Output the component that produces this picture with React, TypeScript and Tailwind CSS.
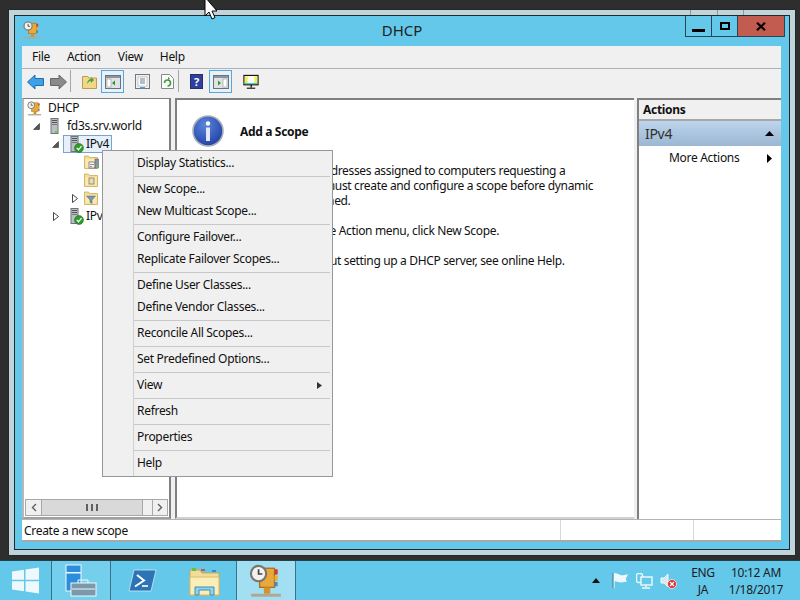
import React from "react";

const font = { fontFamily: '"Noto Sans", "Open Sans", sans-serif' };

function ServerIcon({ check }: { check?: boolean }) {
  return (
    <svg width="14" height="17" viewBox="0 0 14 17">
      <rect x="1" y="0.5" width="7" height="15" fill="#b9bfc4" stroke="#6e7478" strokeWidth="1" />
      <rect x="2" y="2" width="5" height="1" fill="#555" />
      <rect x="2" y="4" width="5" height="1" fill="#555" />
      <rect x="2" y="6" width="5" height="1" fill="#777" />
      {check ? (
        <>
          <circle cx="9" cy="12" r="4.5" fill="#2f9a2a" stroke="#1c6a1a" strokeWidth="0.5" />
          <path d="M6.8 12l1.7 1.8 3-3.6" stroke="#fff" strokeWidth="1.3" fill="none" />
        </>
      ) : (
        <rect x="5" y="13" width="2" height="2" fill="#5fd04a" />
      )}
    </svg>
  );
}

function DhcpIcon({ size = 16, body = "#e8a83a" }: { size?: number; body?: string }) {
  return (
    <svg width={size} height={size} viewBox="0 0 16 16">
      <rect x="5" y="2" width="7" height="9" fill={body} stroke="#a8701c" strokeWidth="0.6" />
      <rect x="12" y="2.5" width="1.5" height="2.5" fill="#d43a2a" />
      <rect x="12" y="5.5" width="1.5" height="2.5" fill="#e8b02a" />
      <rect x="12" y="8.5" width="1.5" height="2" fill="#4a88c8" />
      <circle cx="4.5" cy="4.5" r="3.6" fill="#f2f2ee" stroke="#77756e" strokeWidth="1" />
      <path d="M4.5 2.5v2.2h1.8" stroke="#444" strokeWidth="0.8" fill="none" />
      <rect x="7" y="11" width="3" height="3" fill="#d8902a" />
      <rect x="1" y="14" width="14" height="1.4" fill="#b0a890" />
    </svg>
  );
}

function FolderIcon({ kind }: { kind: "scope" | "server" | "filter" }) {
  return (
    <svg width="15" height="14" viewBox="0 0 15 14">
      <path d="M0.5 2.5V1h4l1 1.5h8v11h-13z" fill="#f7dc93" stroke="#c9a85c" strokeWidth="0.8" />
      <rect x="1.5" y="4" width="11" height="8.5" fill="#fbe9b5" />
      {kind === "scope" && (
        <>
          <rect x="5" y="7" width="6" height="6" fill="#f4f4f4" stroke="#666" strokeWidth="0.7" />
          <rect x="6.5" y="9" width="1" height="1" fill="#333" />
          <rect x="8.5" y="9" width="1" height="1" fill="#333" />
          <rect x="6.5" y="11" width="1" height="1" fill="#333" />
          <rect x="11" y="4" width="3.5" height="9" fill="#8d9499" stroke="#555" strokeWidth="0.5" />
          <rect x="12" y="11" width="2" height="1.5" fill="#5fd04a" />
        </>
      )}
      {kind === "server" && (
        <rect x="5" y="5" width="5" height="6" fill="#e6dcc0" stroke="#8b7c55" strokeWidth="0.8" />
      )}
      {kind === "filter" && <path d="M2.5 5h9l-3.5 4v3.5l-2-1.2V9z" fill="#7f95a8" stroke="#4f6477" strokeWidth="0.5" />}
    </svg>
  );
}

function Arrow({ open }: { open?: boolean }) {
  return open ? (
    <svg width="7" height="7" viewBox="0 0 7 7"><path d="M6.5 0.5v6h-6z" fill="#555" stroke="#333" strokeWidth="0.6" /></svg>
  ) : (
    <svg width="6" height="9" viewBox="0 0 6 9"><path d="M0.5 0.5l5 4-5 4z" fill="#fff" stroke="#333" strokeWidth="0.9" /></svg>
  );
}

function ArrowBox({ open, show = true }: { open?: boolean; show?: boolean }) {
  return <span className="w-[15px] h-full flex items-center justify-center shrink-0">{show && <Arrow open={open} />}</span>;
}

function ToolBtn({ active, children, w = "w-[23px]" }: { active?: boolean; children: React.ReactNode; w?: string }) {
  return (
    <div
      className={
        "h-[23px] flex items-center justify-center shrink-0 border " +
        w +
        (active ? " border-[#5aa6dc] bg-[#e6f1f9]" : " border-transparent")
      }
    >
      {children}
    </div>
  );
}

function PaneIcon({ right }: { right?: boolean }) {
  return (
    <svg width="16" height="14" viewBox="0 0 16 14">
      <rect x="0.5" y="0.5" width="15" height="13" fill="#dfe3e6" stroke="#6b7378" />
      <rect x="1" y="1" width="14" height="2" fill="#8d969c" />
      <rect x={right ? 10 : 2} y="4" width="4" height="8" fill="#fff" stroke="#8d969c" strokeWidth="0.6" />
      <path d={right ? "M5 5.5l3 2.5-3 2.5z" : "M10 5.5l-3 2.5 3 2.5z"} fill="#2f9a2a" />
    </svg>
  );
}

const menu: (string | null)[] = [
  "Display Statistics...",
  null,
  "New Scope...",
  "New Multicast Scope...",
  null,
  "Configure Failover...",
  "Replicate Failover Scopes...",
  null,
  "Define User Classes...",
  "Define Vendor Classes...",
  null,
  "Reconcile All Scopes...",
  null,
  "Set Predefined Options...",
  null,
  "View",
  null,
  "Refresh",
  null,
  "Properties",
  null,
  "Help",
];

function ContextMenu() {
  return (
    <div className="absolute left-[102px] top-[150px] w-[231px] h-[327px] bg-[#f0f0f0] border border-[#979797] pt-[1px] z-10 text-[12px] text-[#111]">
      <div className="absolute left-[30px] top-0 bottom-0 w-px bg-[#d0d0d0]" />
      {menu.map((m, i) =>
        m === null ? (
          <div key={i} className="h-[4px] flex items-center pl-[31px] pr-[2px]">
            <div className="h-px w-full bg-[#c8c8c8]" />
          </div>
        ) : (
          <div key={i} className="h-[22px] flex items-center pl-[34px] pr-[10px] justify-between whitespace-nowrap">
            <span>{m}</span>
            {m === "View" && (
              <svg width="5" height="7" viewBox="0 0 5 7"><path d="M0 0l5 3.5L0 7z" fill="#333" /></svg>
            )}
          </div>
        )
      )}
    </div>
  );
}

function WinLogo() {
  return (
    <svg width="27" height="27" viewBox="0 0 27 27">
      <path d="M0 4.5l12-1.8v10H0zM13.5 2.4L27 .4v12.3H13.5zM0 14.2h12v10L0 22.6zM13.5 14.2H27v12.4l-13.5-2z" fill="#eef9fd" />
    </svg>
  );
}

export default function App() {
  return (
    <div className="relative w-[800px] h-[600px] bg-[#2e2e2e] overflow-hidden flex flex-col tracking-[-0.3px]" style={font}>
      {/* Window */}
      <div className="relative mt-[9px] ml-[8px] w-[788px] h-[547px] border border-[#22292c] bg-[#c1d4da] p-[5px] shrink-0">
        <div className="absolute left-[681px] top-0 w-px h-[5px] bg-[#8a9aa0]" />
        <div className="absolute left-[708px] top-0 w-px h-[5px] bg-[#8a9aa0]" />
        <div className="absolute left-[734px] top-0 w-px h-[5px] bg-[#8a9aa0]" />
        <div className="w-full h-full border border-[#22292c] bg-[#64c8ea] flex flex-col">
          {/* Title */}
          <div className="grid grid-cols-[104px_1fr_104px] h-[30px] shrink-0">
            <div className="pl-[8px] pt-[5px]"><DhcpIcon size={18} /></div>
            <div className="text-center text-[15px] text-[#1f1f1f] pt-[3px] tracking-normal">DHCP</div>
            <div className="flex h-[21px] justify-end">
              <div className="w-[27px] border border-[#2a4552] border-t-0 flex items-end justify-center pb-[4px]">
                <div className="w-[13px] h-[3px] bg-black" />
              </div>
              <div className="w-[26px] border-b border-r border-[#2a4552] flex items-center justify-center">
                <div className="w-[10px] h-[8px] border-2 border-black" />
              </div>
              <div className="w-[47px] border-b border-r border-[#2a4552] bg-[#c25b50] flex items-center justify-center mr-[4px]">
                <svg width="10" height="9" viewBox="0 0 10 9"><path d="M1 0.8l8 7.4M9 0.8l-8 7.4" stroke="#000" strokeWidth="2.2" /></svg>
              </div>
            </div>
          </div>
          {/* Client */}
          <div className="ml-[7px] mr-[7px] w-[759px] flex-1 flex flex-col min-h-0 bg-[#f0f0f0]">
            <div className="h-[23px] flex items-center bg-[#f0f0f0] border-b border-[#aab2bb] shrink-0 text-[12px] text-[#111] pl-[10px] pb-[1px] gap-[17px]">
              <span>File</span><span>Action</span><span>View</span><span>Help</span>
            </div>
            <div className="h-[29px] flex items-start pt-[1px] bg-[#f0f0f0] shrink-0 pl-[2px]">
              <ToolBtn><svg width="17" height="16" viewBox="0 0 17 16"><path d="M0.5 8L8 1v3.5h8.5v7H8V15z" fill="#3ea0e6" stroke="#1f6fb0" /></svg></ToolBtn>
              <ToolBtn><svg width="17" height="16" viewBox="0 0 17 16"><path d="M16.5 8L9 1v3.5H.5v7H9V15z" fill="#8a8a8a" stroke="#666" /></svg></ToolBtn>
              <div className="w-px h-[22px] bg-[#a6a6a6]" />
              <div className="w-[8px]" />
              <ToolBtn w="w-[20px]">
                <svg width="15" height="15" viewBox="0 0 15 15"><path d="M0.5 4V14.5h14V4H7L6 2.5H.5z" fill="#f2d689" stroke="#bb9c50" /><path d="M5 10c0-3 2-5 4-5V3l3 3-3 3V7C7.5 7 6.5 8 5 10z" fill="#48a83a" /></svg>
              </ToolBtn>
              <div className="w-[2px]" />
              <ToolBtn active><PaneIcon /></ToolBtn>
              <div className="w-[9px]" />
              <ToolBtn w="w-[19px]">
                <svg width="15" height="15" viewBox="0 0 15 15"><rect x="0.5" y="0.5" width="14" height="14" fill="#f0f0f0" stroke="#777" /><rect x="3" y="3" width="9" height="9" fill="#fff" stroke="#aaa" strokeWidth="0.6" /><path d="M5 5h5M5 7h5M5 9h5" stroke="#6a7c8c" /><rect x="5" y="13" width="5" height="1.4" fill="#3ea0e6" /></svg>
              </ToolBtn>
              <div className="w-[6px]" />
              <ToolBtn w="w-[19px]">
                <svg width="13" height="15" viewBox="0 0 13 15"><path d="M.5.5h8l4 4v10H.5z" fill="#fafafa" stroke="#888" /><path d="M3.5 9a3 3 0 1 1 3 3" stroke="#3d9e33" strokeWidth="1.6" fill="none" /><path d="M7 3v3l2-1.5z" fill="#3d9e33" /></svg>
              </ToolBtn>
              <div className="w-[1px]" />
              <div className="w-px h-[22px] bg-[#a6a6a6]" />
              <div className="w-[9px]" />
              <ToolBtn w="w-[17px]">
                <div className="w-[13px] h-[15px] bg-[#2f3f9e] border border-[#22306e] text-white text-[11px] font-bold flex items-center justify-center leading-none">?</div>
              </ToolBtn>
              <div className="w-[4px]" />
              <ToolBtn active><PaneIcon right /></ToolBtn>
              <div className="w-[10px]" />
              <ToolBtn w="w-[18px]">
                <svg width="17" height="16" viewBox="0 0 17 16"><rect x="1" y="1" width="15" height="10" fill="#fff" stroke="#111" strokeWidth="1.2" /><rect x="2" y="2" width="13" height="8" fill="#f4ef4a" /><rect x="5" y="2" width="7" height="8" fill="#fff" /><rect x="2" y="9" width="13" height="1" fill="#27c6d8" /><rect x="8" y="11" width="1.4" height="3" fill="#111" /><rect x="4" y="14" width="9" height="1.2" fill="#111" /></svg>
              </ToolBtn>
            </div>
            {/* Panes */}
            <div className="flex-1 flex min-h-0 bg-[#f0f0f0]">
              {/* Tree */}
              <div className="w-[149px] border-2 border-t border-[#a0a0a0] border-t-[#808080] border-l-[#b8b8b8] border-r-[#808080] bg-white flex flex-col shrink-0 text-[12px] text-[#111]">
                <div className="flex-1 whitespace-nowrap">
                  <div className="h-[18px] flex items-center pl-[3px]">
                    <span className="w-[21px] flex items-center"><DhcpIcon size={15} /></span>DHCP
                  </div>
                  <div className="h-[18px] flex items-center pl-[5px]">
                    <ArrowBox open />
                    <span className="w-[23px] flex items-center pl-[6px]"><ServerIcon /></span>fd3s.srv.world
                  </div>
                  <div className="h-[18px] flex items-center pl-[24px]">
                    <ArrowBox open />
                    <span className="flex items-center h-[18px] w-[49px] border border-[#7da2ce] bg-[#e6f0fa] shrink-0">
                      <span className="w-[22px] flex items-center pl-[6px]"><ServerIcon check /></span>IPv4
                    </span>
                  </div>
                  <div className="h-[18px] flex items-center pl-[43px]"><ArrowBox show={false} /><span className="ml-[2px] flex"><FolderIcon kind="scope" /></span></div>
                  <div className="h-[18px] flex items-center pl-[43px]"><ArrowBox show={false} /><span className="ml-[2px] flex"><FolderIcon kind="server" /></span></div>
                  <div className="h-[18px] flex items-center pl-[43px]"><ArrowBox /><span className="ml-[2px] flex"><FolderIcon kind="filter" /></span></div>
                  <div className="h-[18px] flex items-center pl-[24px]">
                    <ArrowBox />
                    <span className="w-[23px] flex items-center pl-[7px]"><ServerIcon check /></span>IPv6
                  </div>
                </div>
                <div className="h-[17px] mx-[1px] mb-[1px] flex bg-[#f0f0f0] border border-[#a8a8a8] shrink-0 items-stretch">
                  <div className="w-[16px] border-r border-[#a8a8a8] flex items-center justify-center">
                    <svg width="6" height="9" viewBox="0 0 6 9"><path d="M5 1L1.5 4.5 5 8" stroke="#606060" strokeWidth="1.4" fill="none" /></svg>
                  </div>
                  <div className="w-[101px] bg-[#d9d9d9] border-r border-[#a8a8a8] flex items-center justify-center gap-px">
                    <div className="w-[2px] h-[7px] bg-[#606060]" /><div className="w-px" />
                    <div className="w-[2px] h-[7px] bg-[#606060]" /><div className="w-px" />
                    <div className="w-[2px] h-[7px] bg-[#606060]" />
                  </div>
                  <div className="w-[10px] border-r border-[#a8a8a8]" />
                  <div className="flex-1 flex items-center justify-center">
                    <svg width="6" height="9" viewBox="0 0 6 9"><path d="M1 1l3.5 3.5L1 8" stroke="#606060" strokeWidth="1.4" fill="none" /></svg>
                  </div>
                </div>
              </div>
              <div className="w-[4px] shrink-0" />
              {/* Center */}
              <div className="w-[459px] border-t-2 border-l-2 border-[#808080] border-b-2 border-b-[#d0d0d0] bg-white shrink-0 text-[12px] leading-[15px] text-[#111] pl-[15px] pt-[15px] whitespace-nowrap tracking-[-0.34px]">
                <div className="flex items-center h-[32px] gap-[16px]">
                  <svg width="32" height="32" viewBox="0 0 32 32">
                    <defs>
                      <radialGradient id="ig" cx="0.4" cy="0.3" r="0.8"><stop offset="0" stopColor="#5b86dc" /><stop offset="1" stopColor="#1a3aa0" /></radialGradient>
                    </defs>
                    <circle cx="16" cy="16" r="15" fill="url(#ig)" stroke="#a8aeb8" strokeWidth="1.6" />
                    <circle cx="16" cy="8.5" r="2.2" fill="#fff" />
                    <path d="M14 12.5h4v13.5h-4z" fill="#e4e8f0" />
                  </svg>
                  <span className="font-bold">Add a Scope</span>
                </div>
                <div className="mt-[16px]">
                  <div>A scope is a range of IP addresses assigned to computers requesting a</div>
                  <div>dynamic IP address. You must create and configure a scope before dynamic</div>
                  <div>IP addresses can be assigned.</div>
                  <div className="mt-[15px]">To add a new scope, on the Action menu, click New Scope.</div>
                  <div className="mt-[15px]">For more information about setting up a DHCP server, see online Help.</div>
                </div>
              </div>
              <div className="w-[3px] shrink-0" />
              {/* Actions */}
              <div className="w-[144px] shrink-0 border-t-2 border-l-2 border-[#808080] bg-white flex flex-col text-[12px] text-[#111]">
                <div className="h-[21px] bg-[#f0f0f0] border-b-2 border-[#a8a8a8] flex items-center pl-[4px] font-bold shrink-0">Actions</div>
                <div className="h-[25px] bg-gradient-to-b from-[#bdd4ec] to-[#9bb7d2] flex items-center justify-between pl-[6px] pr-[7px] text-[14px] text-[#33302a] shrink-0">
                  <span>IPv4</span>
                  <svg width="9" height="5" viewBox="0 0 9 5"><path d="M4.5 0L9 5H0z" fill="#000" /></svg>
                </div>
                <div className="h-[24px] flex items-center justify-between pl-[30px] pr-[9px]">
                  <span>More Actions</span>
                  <svg width="5" height="9" viewBox="0 0 5 9"><path d="M0 0l5 4.5L0 9z" fill="#000" /></svg>
                </div>
              </div>
            </div>
            {/* Status */}
            <div className="h-[23px] bg-white border-t border-b-2 border-[#b4b4b4] flex items-stretch shrink-0 text-[12px] text-[#111] border-b-[#a8a8a8]">
              <div className="w-[539px] flex items-center pl-[2px] pt-[1px] border-r border-[#d8d8d8]">Create a new scope</div>
              <div className="w-[133px] border-r border-[#d8d8d8]" />
              <div className="flex-1" />
            </div>
          </div>
          <div className="h-[7px] shrink-0" />
        </div>
      </div>
      {/* Taskbar */}
      <div className="mt-[4px] h-[40px] bg-[#64c8ea] border-t border-[#26414d] flex items-stretch shrink-0 text-[12px] text-[#1c1c1c]">
        <div className="w-[52px] border-r border-[#3a7088] flex items-center justify-center"><WinLogo /></div>
        <div className="w-[59px] border-r border-[#3a7088] flex items-center justify-center bg-[#74cfec]">
          <svg width="32" height="33" viewBox="0 0 32 33">
            <rect x="1" y="1" width="15" height="26" fill="#2b8ddb" stroke="#eef9fd" />
            <rect x="1" y="8" width="15" height="1.5" fill="#eef9fd" />
            <rect x="6" y="19" width="25" height="13" fill="#7c99ab" stroke="#eef9fd" />
            <path d="M13 19v-3h10v3" fill="none" stroke="#eef9fd" />
            <path d="M7 25h23" stroke="#eef9fd" />
          </svg>
        </div>
        <div className="w-[63px] flex items-center justify-center">
          <svg width="29" height="23" viewBox="0 0 29 23">
            <path d="M6 1h22l-5 21H1z" fill="#2d74b4" stroke="#cfeaf7" strokeWidth="0.8" />
            <path d="M9 6l7 5.5-9 6" stroke="#fff" strokeWidth="2" fill="none" />
            <path d="M14 17h6" stroke="#fff" strokeWidth="1.6" />
          </svg>
        </div>
        <div className="w-[63px] border-r border-[#3a7088] flex items-center justify-center">
          <svg width="32" height="32" viewBox="0 0 32 32">
            <path d="M1 8V5h10l2 3h17v22H1z" fill="#f3dc96" stroke="#c9a85c" />
            <rect x="3" y="3" width="4" height="3" fill="#6abf3a" />
            <rect x="12" y="4" width="4" height="2" fill="#d9533a" />
            <rect x="23" y="5" width="4" height="2" fill="#2f8fd0" />
            <rect x="1" y="12" width="29" height="18" fill="#fbeeb8" stroke="#d9b96c" />
            <path d="M6 30v-8h19v8h-4v-5H10v5z" fill="#8fd3ee" stroke="#3a8fb8" />
          </svg>
        </div>
        <div className="w-[59px] border-r border-[#3a7088] bg-[#a2dff3] flex items-center justify-center">
          <DhcpIcon size={34} />
        </div>
        <div className="flex-1" />
        <div className="flex items-center">
          <svg width="8" height="5" viewBox="0 0 8 5"><path d="M4 0l4 5H0z" fill="#111" /></svg>
          <div className="w-[12px]" />
          <svg width="17" height="17" viewBox="0 0 17 17">
            <path d="M2 1v15M2 2c3-1 5 2 8 2l5-1-2 4 1 2-5 1C6 10 4 8 2 9z" fill="#eef9fd" stroke="#eef9fd" strokeWidth="1.2" />
            <path d="M1 1v15" stroke="#245" strokeWidth="0.6" />
          </svg>
          <div className="w-[7px]" />
          <svg width="17" height="16" viewBox="0 0 17 16">
            <rect x="0.5" y="0.5" width="6" height="9" rx="2" fill="none" stroke="#eef9fd" strokeWidth="1.4" />
            <rect x="5" y="4" width="11" height="8" fill="#64c8ea" stroke="#eef9fd" strokeWidth="1.4" />
            <path d="M10 12v2M6 15h8" stroke="#eef9fd" strokeWidth="1.4" />
          </svg>
          <div className="w-[7px]" />
          <svg width="17" height="16" viewBox="0 0 17 16">
            <path d="M1 5h3l4-4v13l-4-4H1z" fill="#d8e8ec" stroke="#eef9fd" />
            <circle cx="12" cy="11" r="4.5" fill="#d7322e" stroke="#f6f6f6" strokeWidth="0.8" />
            <path d="M10 9l4 4M14 9l-4 4" stroke="#fff" strokeWidth="1.4" />
          </svg>
          <div className="w-[13px]" />
          <div className="w-[26px] flex flex-col items-center leading-[17px]"><span>ENG</span><span>JA</span></div>
          <div className="w-[14px]" />
          <div className="w-[52px] flex flex-col items-center leading-[17px] mr-[18px] whitespace-nowrap"><span>10:12 AM</span><span>1/18/2017</span></div>
        </div>
      </div>
      <ContextMenu />
      {/* Cursor */}
      <svg className="absolute left-[204px] top-0 z-20" width="14" height="21" viewBox="0 0 14 21">
        <path d="M1 -3v19l4-4 3 7 3-1.4-3-6.6h5z" fill="#fff" stroke="#000" strokeWidth="1" />
      </svg>
    </div>
  );
}
